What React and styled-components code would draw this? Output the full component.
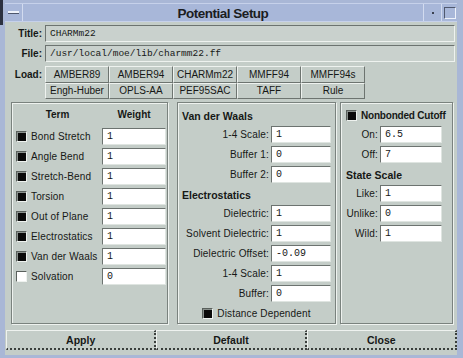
import React from 'react'
import styled, { createGlobalStyle } from 'styled-components'

const GlobalStyle = createGlobalStyle`
  html, body {
    margin: 0;
    padding: 0;
    background: #a9b7d6;
  }
  body {
    font-family: "Liberation Sans", Arial, sans-serif;
    color: #161816;
  }
`

const terms = [
    { name: 'Bond Stretch', on: true, value: '1' },
    { name: 'Angle Bend', on: true, value: '1' },
    { name: 'Stretch-Bend', on: true, value: '1' },
    { name: 'Torsion', on: true, value: '1' },
    { name: 'Out of Plane', on: true, value: '1' },
    { name: 'Electrostatics', on: true, value: '1' },
    { name: 'Van der Waals', on: true, value: '1' },
    { name: 'Solvation', on: false, value: '0' },
]

const loads = [
    'AMBER89', 'AMBER94', 'CHARMm22', 'MMFF94', 'MMFF94s',
    'Engh-Huber', 'OPLS-AA', 'PEF95SAC', 'TAFF', 'Rule',
]

function App() {
    return (
        <Frame>
            <GlobalStyle />
            <TitleBar>
                <MenuBtn><MenuBar /></MenuBtn>
                <Caption>Potential Setup</Caption>
                <MinBtn><Dot /></MinBtn>
                <MaxBtn><Square /></MaxBtn>
            </TitleBar>

            <Body>
                <FieldRow>
                    <RowLabel>Title:</RowLabel>
                    <TextField>CHARMm22</TextField>
                </FieldRow>
                <FieldRow>
                    <RowLabel>File:</RowLabel>
                    <TextField>/usr/local/moe/lib/charmm22.ff</TextField>
                </FieldRow>

                <LoadRow>
                    <RowLabel>Load:</RowLabel>
                    <LoadGrid>
                        {loads.map(l => <LoadButton key={l}>{l}</LoadButton>)}
                    </LoadGrid>
                </LoadRow>

                <Panels>
                    <Panel width={157}>
                        <TermGrid>
                            <ColHead>Term</ColHead>
                            <ColHead>Weight</ColHead>
                            {terms.map(t => (
                                <React.Fragment key={t.name}>
                                    <TermCell>
                                        <Check on={t.on} />
                                        <span>{t.name}</span>
                                    </TermCell>
                                    <Input>{t.value}</Input>
                                </React.Fragment>
                            ))}
                        </TermGrid>
                    </Panel>

                    <Panel width={159} gap={9}>
                        <Inner pad="3px 3px 0 3px">
                            <Heading>Van der Waals</Heading>
                            <Param labelW={87} label="1-4 Scale:" value="1" />
                            <Param labelW={87} label="Buffer 1:" value="0" />
                            <Param labelW={87} label="Buffer 2:" value="0" />
                            <Heading>Electrostatics</Heading>
                            <Param labelW={87} label="Dielectric:" value="1" />
                            <Param labelW={87} label="Solvent Dielectric:" value="1" />
                            <Param labelW={87} label="Dielectric Offset:" value="-0.09" />
                            <Param labelW={87} label="1-4 Scale:" value="1" />
                            <Param labelW={87} label="Buffer:" value="0" />
                            <CheckRow>
                                <Check on />
                                <span>Distance Dependent</span>
                            </CheckRow>
                        </Inner>
                    </Panel>

                    <Panel width={113} gap={4}>
                        <Inner pad="3px 9px 0 4px">
                            <Heading>
                                <Check on />
                                <HeadText>Nonbonded Cutoff</HeadText>
                            </Heading>
                            <Param labelW={32} label="On:" value="6.5" />
                            <Param labelW={32} label="Off:" value="7" />
                            <Heading>State Scale</Heading>
                            <Param labelW={32} label="Like:" value="1" />
                            <Param labelW={32} label="Unlike:" value="0" />
                            <Param labelW={32} label="Wild:" value="1" />
                        </Inner>
                    </Panel>
                </Panels>

                <ActionBar>
                    <ActionButton>Apply</ActionButton>
                    <ActionButton>Default</ActionButton>
                    <ActionButton>Close</ActionButton>
                </ActionBar>
            </Body>
        </Frame>
    )
}

function Param({ label, value, labelW }) {
    return (
        <ParamRow>
            <ParamLabel w={labelW}>{label}</ParamLabel>
            <Input>{value}</Input>
        </ParamRow>
    )
}

export default App


const Frame = styled.div`
    position: relative;
    width: 463px;
    height: 358px;
    box-sizing: border-box;
    padding: 3px 6px 3px 5px;
    background: #a9b7d6;
    display: flex;
    flex-direction: column;
    overflow: hidden;

    &::before {
        content: '';
        position: absolute;
        left: 0;
        top: 0;
        width: 3px;
        height: 25px;
        background: #2c3140;
    }
`

const TitleBar = styled.div`
    display: flex;
    height: 19px;
    background: #a8b7d9;
    border-top: 1px solid #c6d1ea;
    border-bottom: 1px solid #c6d1ea;
    box-sizing: border-box;
`

const TitleCell = styled.div`
    display: flex;
    align-items: center;
    justify-content: center;
    box-sizing: border-box;
`

const MenuBtn = styled(TitleCell)`
    width: 18px;
    border-right: 1px solid #d2dbef;
`

const MenuBar = styled.div`
    width: 11px;
    height: 2px;
    background: #eef2fa;
    border-bottom: 1px solid #4d566c;
`

const Caption = styled(TitleCell)`
    flex: 1;
    font-size: 13.5px;
    font-weight: bold;
    letter-spacing: -0.5px;
    color: #1b1d22;
    padding-top: 1px;
`

const MinBtn = styled(TitleCell)`
    width: 19px;
    border-left: 1px solid #d2dbef;
    border-right: 1px solid #d2dbef;
`

const Dot = styled.div`
    width: 2px;
    height: 2px;
    background: #3a4050;
`

const MaxBtn = styled(TitleCell)`
    width: 15px;
`

const Square = styled.div`
    width: 10px;
    height: 10px;
    border: 1px solid #4f586e;
    border-right-color: #eef2fa;
    border-bottom-color: #eef2fa;
`

const Body = styled.div`
    flex: 1;
    background: #c4cdc8;
    padding: 3px 0 0 0;
    display: flex;
    flex-direction: column;
`

const FieldRow = styled.div`
    display: flex;
    align-items: center;
    height: 17px;
    margin-bottom: 3px;
    padding-right: 2px;
`

const RowLabel = styled.div`
    width: 37px;
    text-align: right;
    font-size: 10px;
    font-weight: bold;
    margin-right: 3px;
    align-self: flex-start;
    line-height: 17px;
`

const TextField = styled.div`
    flex: 1;
    height: 17px;
    box-sizing: border-box;
    background: #c9d1cd;
    border-top: 1px solid #6c7370;
    border-left: 1px solid #6c7370;
    border-bottom: 1px solid #eef2ef;
    border-right: 1px solid #eef2ef;
    font-family: "Liberation Mono", "Courier New", monospace;
    font-size: 9.5px;
    line-height: 15px;
    padding-left: 4px;
    white-space: nowrap;
`

const LoadRow = styled.div`
    display: flex;
    margin-top: 1px;
`

const LoadGrid = styled.div`
    display: grid;
    grid-template-columns: repeat(5, 64px);
    grid-auto-rows: 16.5px;
`

const LoadButton = styled.div`
    display: flex;
    align-items: center;
    justify-content: center;
    box-sizing: border-box;
    font-size: 10px;
    white-space: nowrap;
    border-top: 1px solid #eef2ef;
    border-left: 1px solid #eef2ef;
    border-bottom: 1px solid #6d7470;
    border-right: 1px solid #6d7470;
`

const Panels = styled.div`
    display: flex;
    margin-top: 3px;
    padding-left: 6px;
    height: 222px;
`

const Panel = styled.div`
    width: ${p => p.width}px;
    margin-left: ${p => p.gap || 0}px;
    box-sizing: border-box;
    border: 1px solid #7a827e;
    box-shadow: inset 1px 1px 0 #eef2ef, 1px 1px 0 #eef2ef;
    padding: 1px;
`

const TermGrid = styled.div`
    display: grid;
    grid-template-columns: 89px 64px;
    grid-template-rows: 20px;
    grid-auto-rows: 17px;
    row-gap: 3px;
    padding-top: 1px;
`

const ColHead = styled.div`
    font-size: 10px;
    font-weight: bold;
    text-align: center;
    line-height: 20px;
    margin-bottom: -1px;
`

const TermCell = styled.div`
    display: flex;
    align-items: center;
    gap: 4px;
    padding-left: 3px;
    font-size: 10px;
    letter-spacing: 0.15px;
    white-space: nowrap;
`

const Input = styled.div`
    flex: 1;
    height: 17px;
    box-sizing: border-box;
    background: #ffffff;
    border-top: 1px solid #6c7370;
    border-left: 1px solid #6c7370;
    border-bottom: 1px solid #dfe5e1;
    border-right: 1px solid #dfe5e1;
    font-family: "Liberation Mono", "Courier New", monospace;
    font-size: 10px;
    line-height: 15px;
    padding-left: 4px;
`

const Check = styled.span`
    display: inline-block;
    flex: none;
    width: 11px;
    height: 11px;
    box-sizing: border-box;
    border: 1px solid #59605c;
    border-right-color: #eef2ef;
    border-bottom-color: #eef2ef;
    background: ${p => (p.on ? '#0a0a0a' : '#ffffff')};
    box-shadow: inset 1px 1px 0 ${p => (p.on ? '#8a918d' : '#ffffff')};
`

const Inner = styled.div`
    padding: ${p => p.pad};
    display: flex;
    flex-direction: column;
`

const Heading = styled.div`
    display: flex;
    align-items: center;
    gap: 4px;
    height: 17px;
    margin-bottom: 2px;
    font-size: 10.5px;
    font-weight: bold;
    white-space: nowrap;
`

const HeadText = styled.span`
    font-size: 10px;
    letter-spacing: -0.2px;
`

const ParamRow = styled.div`
    display: flex;
    align-items: center;
    height: 17px;
    margin-bottom: 3px;
`

const ParamLabel = styled.div`
    width: ${p => p.w}px;
    margin-right: 2px;
    text-align: right;
    font-size: 10px;
    letter-spacing: 0.15px;
    white-space: nowrap;
`

const CheckRow = styled.div`
    display: flex;
    align-items: center;
    justify-content: center;
    gap: 4px;
    height: 16px;
    font-size: 10px;
    letter-spacing: 0.15px;
`

const ActionBar = styled.div`
    display: flex;
    margin-top: 6px;
    padding-left: 1px;
`

const ActionButton = styled.div`
    flex: 1;
    height: 20px;
    box-sizing: border-box;
    display: flex;
    align-items: center;
    justify-content: center;
    font-size: 10.5px;
    font-weight: bold;
    border-top: 1px solid #eef2ef;
    border-left: 1px solid #eef2ef;
    border-bottom: 2px dotted #3a3f3c;
    border-right: 2px dotted #3a3f3c;
`
